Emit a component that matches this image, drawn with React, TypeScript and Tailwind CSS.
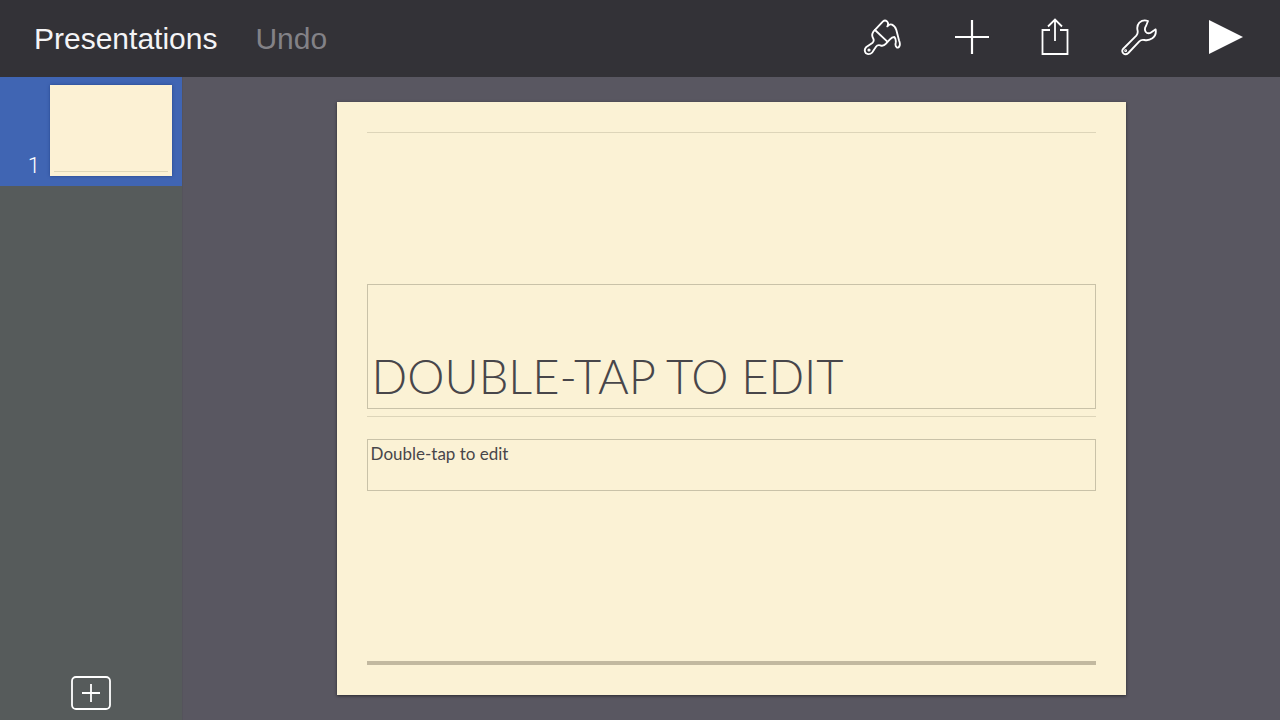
import { useState } from "react";
import type { ReactNode } from "react";

type Slide = {
  id: number;
  title: string;
  body: string;
};

const BrushIcon = () => (
  <svg
    viewBox="30 24 120 111"
    className="h-[37px] w-10"
    fill="none"
    stroke="currentColor"
    strokeWidth="5.5"
    strokeLinecap="round"
    strokeLinejoin="round"
  >
    <path d="M90 31 Q96 26 102 31 Q108 37 103 46 Q109 38 117 41 Q126 45 130 57 L138 88 Q142 97 140 104 Q137 112 131 109 Q126 105 128 96 Q130 84 124 78 Q117 78 110 86 L99 98 Q91 107 82 103 Q73 101 69 107 L58 124 Q49 133 39 127 Q31 117 40 108 L59 95 Q64 90 61 83 Q54 72 61 62 Z" />
    <path d="M66 57 L103 92" />
    <circle cx="48" cy="117" r="2" />
  </svg>
);

const PlusIcon = () => (
  <svg viewBox="0 0 36 36" className="size-9" stroke="currentColor" strokeWidth="2.2">
    <path d="M18 1v34M1 18h34" />
  </svg>
);

const ShareIcon = () => (
  <svg
    viewBox="0 0 28 38"
    className="h-[38px] w-7"
    fill="none"
    stroke="currentColor"
    strokeWidth="1.8"
  >
    <path d="M9 12H1.500v24h25V12H19" />
    <path d="M14 23V1.500M7 8.500l7-7 7 7" />
  </svg>
);

const WrenchIcon = () => (
  <svg
    viewBox="26 24 114 111"
    className="h-[37px] w-[38px]"
    fill="none"
    stroke="currentColor"
    strokeWidth="5.5"
    strokeLinejoin="round"
  >
    <path d="M110 30 Q95 25 84 35 Q75 45 79 60 Q80 68 75 74 L35 114 Q30 121 36 127 Q43 133 51 126 L84 91 Q90 85 99 87 Q112 90 123 82 Q136 72 133 55 L117 66 Q108 69 103 62 Q98 54 104 45 Z" />
    <circle cx="43" cy="119" r="1.500" />
  </svg>
);

const PlayIcon = () => (
  <svg viewBox="0 0 34 34" className="size-[34px]" fill="currentColor">
    <path d="M0 0 34 17 0 34Z" />
  </svg>
);

const AddSlideIcon = () => (
  <svg
    viewBox="0 0 40 34"
    className="h-[34px] w-10"
    fill="none"
    stroke="currentColor"
    strokeWidth="1.8"
  >
    <rect x="1" y="1" width="38" height="32" rx="4" />
    <path d="M20 8v18M11 17h18" />
  </svg>
);

function ToolButton({
  label,
  onClick,
  children,
}: {
  label: string;
  onClick?: () => void;
  children: ReactNode;
}) {
  return (
    <button type="button" aria-label={label} onClick={onClick} className="flex items-center justify-center text-white">
      {children}
    </button>
  );
}

// text stays locked until it is double-tapped
function EditableText({ text, label, className }: { text: string; label: string; className: string }) {
  const [editing, setEditing] = useState(false);

  return (
    <div
      role="textbox"
      aria-label={label}
      tabIndex={0}
      contentEditable={editing}
      suppressContentEditableWarning
      onDoubleClick={() => setEditing(true)}
      onBlur={() => setEditing(false)}
      className={className}
    >
      {text}
    </div>
  );
}

export default function App() {
  const [slides, setSlides] = useState<Slide[]>([
    { id: 1, title: "DOUBLE-TAP TO EDIT", body: "Double-tap to edit" },
  ]);
  const [selectedId, setSelectedId] = useState(1);
  const selected = slides.find((slide) => slide.id === selectedId) ?? slides[0];

  const addSlide = () => {
    const id = slides.length + 1;
    setSlides([...slides, { id, title: "DOUBLE-TAP TO EDIT", body: "Double-tap to edit" }]);
    setSelectedId(id);
  };

  return (
    <div className="flex min-h-screen flex-col bg-[#595761] font-['Liberation_Sans',sans-serif]">
      <header className="flex items-start justify-between bg-[#333237] pt-[18px] pr-[37px] pb-[18px] pl-[34px]">
        <nav className="flex items-center gap-[38px] text-[30px] leading-[41px]">
          <button type="button" className="text-[#f4f4f6]">
            Presentations
          </button>
          <button type="button" disabled className="text-[#838287]">
            Undo
          </button>
        </nav>
        <div className="flex items-center gap-[51px]">
          <ToolButton label="Format">
            <BrushIcon />
          </ToolButton>
          <ToolButton label="Insert">
            <PlusIcon />
          </ToolButton>
          <ToolButton label="Share">
            <ShareIcon />
          </ToolButton>
          <ToolButton label="Tools">
            <WrenchIcon />
          </ToolButton>
          <ToolButton label="Play">
            <PlayIcon />
          </ToolButton>
        </div>
      </header>

      <div className="flex flex-1">
        <aside className="flex w-[182px] shrink-0 flex-col justify-between bg-[#565b5b]">
          <ol>
            {slides.map((slide) => (
              <li key={slide.id}>
                <button
                  type="button"
                  onClick={() => setSelectedId(slide.id)}
                  className={`flex w-full items-end justify-end gap-2.5 pt-2 pr-2.5 pb-2.5 text-white ${
                    slide.id === selectedId ? "bg-[#4065b3]" : ""
                  }`}
                >
                  <span className="font-['Roboto',sans-serif] text-[22px] leading-5 font-light">{slide.id}</span>
                  <span className="flex h-[91px] w-[122px] flex-col justify-end bg-[#fcf1d4] px-1 pb-1 shadow-[0_0_3px_#26468c]">
                    <span className="h-px bg-[#ded6b8]" />
                  </span>
                </button>
              </li>
            ))}
          </ol>
          <div className="flex justify-center pb-2.5">
            <ToolButton label="Add slide" onClick={addSlide}>
              <AddSlideIcon />
            </ToolButton>
          </div>
        </aside>

        <main className="flex flex-1 items-center justify-center border-l border-[#55535c]">
          <article
            key={selected.id}
            className="flex aspect-[4/3] w-[72%] flex-col bg-[#fbf2d5] px-[30px] pt-[30px] pb-[30px] font-['Lato',sans-serif] text-[#48464a] shadow-[0_1px_3px_#2b2a30]"
          >
            <hr className="border-[#ddd5b9]" />
            <EditableText
              label="Title"
              text={selected.title}
              className="mt-auto flex h-[125px] items-end border border-[#c9c2a8] px-1 pb-1 text-[47px] leading-[56px] font-light"
            />
            <hr className="mt-[7px] border-[#ddd5b9]" />
            <EditableText
              label="Body"
              text={selected.body}
              className="mt-[22px] h-[52px] border border-[#c9c2a8] px-[3px] pt-0.5 text-[17px] leading-6"
            />
            <hr className="mt-[170px] border-t-4 border-[#c2b9a0]" />
          </article>
        </main>
      </div>
    </div>
  );
}
